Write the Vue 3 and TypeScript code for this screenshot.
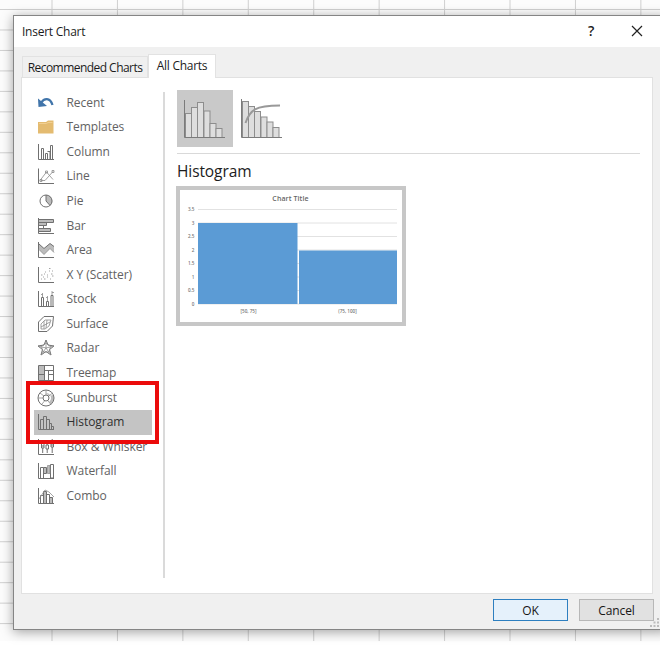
<script setup lang="ts">
import { ref } from 'vue'

interface ChartKind {
  name: string
  dark: string
  fill?: string
  soft?: string
}

const columns = Array.from({ length: 10 }, (_, i) => 52 + i * 65.43)
const rows = Array.from({ length: 31 }, (_, i) => 9.5 + i * 20.47)

const kinds: ChartKind[] = [
  { name: 'Recent', dark: '' },
  { name: 'Templates', dark: '' },
  { name: 'Column', dark: 'M1.5 1V16.5H17M4.5 16V5.5H6.5V16M8.5 16V10.5H10.5V16M10.5 8.5H13V16M13.5 16V2.5H15.5V16' },
  { name: 'Line', dark: 'M1.5 1.5V16.5H17', soft: 'M3 13.5L9.5 5L16 12.5M4 13.5H8L16 4.5M3 12.5h2v2h-2zM8.5 4h2v2h-2zM15 3.5h2v2h-2z' },
  { name: 'Pie', dark: 'M9 3A6 6 0 1 0 15 9A6 6 0 0 0 9 3V9L13 13.5', fill: 'M9 3A6 6 0 0 1 13.3 13.5L9 9Z' },
  { name: 'Bar', dark: 'M1.5 1V16.5H17M2 2.5H16.5V5.5H2M2 5.5H9.5V8.5H2M2 8.5H6.5V11.5H2M2 11.5H13.5V14.5H2', fill: 'M2 2.5H16.5V5.5H2ZM2 5.5H9.5V8.5H2ZM2 11.5H13.5V14.5H2Z' },
  { name: 'Area', dark: 'M1.5 1V16.5H17M2 3L7 7.5L13 2.5L17 5.5', fill: 'M2 3L7 7.5L13 2.5L17 5.5V11.5L13 7.5L7 13.5L2 8.5Z', soft: 'M2 8.5L7 13.5L13 7.5L17 11.5' },
  { name: 'X Y (Scatter)', dark: 'M1.5 1V16.5H17', soft: 'M4 9h1.5M8 6h1M12 2.5h1.5M15 5h1M6 11h1M10 9h1M14 8h1.5M4 13h1M7 13h1.5M10 11h1M13 13h1M15 10h1.5M12 5h1M7 8h1' },
  { name: 'Stock', dark: 'M1.5 1V16.5H17M4.5 16V7.5H6.5V16M9.5 16V11.5H11.5V16M14 16V5.5H16V16', soft: 'M5.5 3V7M10.5 6V11M15 1V5M4 4.5H5.5M9 7.5H10.5M15 2.5H17' },
  { name: 'Surface', dark: 'M1.5 7L7 1.5H16.5L15.5 11L10 16.5H1.5Z', soft: 'M4 9L8 5H14L12 11L8 14H4ZM4 12L13 7M7 6V14M10 5L9 13' },
  { name: 'Radar', dark: 'M9 1L11 6L17 7L12.5 10.5L14 16L9 12.5L4 16L5.5 10.5L1 7L7 6Z', soft: 'M9 4L13.5 7.5L12 13H6L4.5 7.5ZM9 1V9L17 7M9 9L14 16M9 9L4 16M9 9L1 7' },
  { name: 'Treemap', dark: 'M1.5 1.5H16.5V16.5H1.5ZM7.5 1.5V16.5M1.5 10.5H7.5M7.5 6.5H16.5M11.5 6.5V16.5M11.5 10.5H16.5', fill: 'M2 2H7.5V16H2Z' },
  { name: 'Sunburst', dark: 'M9 1A8 8 0 1 0 17 9A8 8 0 0 0 9 1ZM9 6A3 3 0 1 0 12 9A3 3 0 0 0 9 6Z', soft: 'M9 1V6M3 4L7 7M1 9H6M5 15L7.5 12M11 12L14 15.5M12 7L15.5 4', fill: 'M9 4A5 5 0 0 1 12 13L14 15A8 8 0 0 0 16 6L12 7Z' },
  { name: 'Histogram', dark: 'M1.5 1V16.5H17M3.5 16V6.5H6.5V16M6.5 7V3.5H9.5V16M9.5 6.5H12.5V16M12.5 10.5H14.5V16M14.5 13.5H16.5V16' },
  { name: 'Box & Whisker', dark: 'M1.5 1V16.5H17M4.5 5H7V10H4.5ZM9 7H11.5V11H9ZM14 4H16.5V9H14ZM5.7 2V5M5.7 10V15M10.2 4V7M10.2 11V15M15.2 1V4M15.2 9V15M4.5 8H7M14 7H16.5' },
  { name: 'Waterfall', dark: 'M1.5 1V16.5H17M3.5 16V5.5H6.5V16M6.5 5.5H9.5V11.5H7M13.5 2.5H16.5V16H13.5Z', soft: 'M10.5 11.5V3.5H13V11.5Z', fill: 'M7 6H10V11H7ZM11 4H13V11H11Z' },
  { name: 'Combo', dark: 'M1.5 1V16.5H17M3.5 16V8.5H6.5V16M6.5 16V4.5H9.5V16M9.5 7.5H12.5V16M12.5 10.5H15.5V16', soft: 'M2 12L8 3L12 5L17 10', fill: 'M6.5 5H9.5V16H6.5ZM12.5 10H15.5V16H12.5Z' },
]

const selected = ref('Histogram')
const histogramBars = [[8.5, 23.5], [14.5, 17.5], [20.5, 12.5], [27, 21], [33, 33.5], [39, 38.5]]
const paretoBars = [[2.5, 11.5], [8.5, 16.5], [14.5, 21.5], [21, 27], [27, 32], [33, 37.5]]
const ticks = ['3.5', '3', '2.5', '2', '1.5', '1', '0.5', '0']
</script>

<template>
  <main class="screen">
    <svg class="sheet" width="660" height="641" aria-hidden="true">
      <path v-for="x in columns" :key="'c' + x" :d="`M${x} 0V641`" />
      <path v-for="y in rows" :key="'r' + y" :d="`M0 ${y}H660`" />
    </svg>

    <section class="dialog">
      <header class="titlebar">
        <span class="title">Insert Chart</span>
        <span class="help">?</span>
        <svg class="close" width="12" height="12"><path d="M1 1L11 11M11 1L1 11" /></svg>
      </header>

      <nav class="tabs">
        <span class="tab">Recommended Charts</span>
        <span class="tab active">All Charts</span>
      </nav>

      <div class="panel">
        <aside class="side">
          <ul class="kinds">
            <li v-for="k in kinds" :key="k.name" :class="{ selected: selected === k.name }" @click="selected = k.name">
              <svg class="icon" width="18" height="18" viewBox="0 0 18 18">
                <template v-if="k.name === 'Recent'">
                  <path class="arrow" d="M4 9C7 4 13 3 15.5 11" />
                  <path class="arrow-head" d="M1 4.5L1.5 13L10 12Z" />
                </template>
                <template v-else-if="k.name === 'Templates'">
                  <path class="folder" d="M1 4H9L11 2.5H16.5V15.5H1Z" />
                  <path class="folder-edge" d="M2 5.5H9.5L11 4.5H15.5" />
                </template>
                <template v-else>
                  <path v-if="k.fill" class="fill" :d="k.fill" />
                  <path class="dark" :d="k.dark" />
                  <path v-if="k.soft" class="soft" :d="k.soft" />
                </template>
              </svg>
              <span>{{ k.name }}</span>
            </li>
          </ul>
          <div class="highlight"></div>
        </aside>

        <div class="content">
          <div class="variants">
            <div class="variant chosen">
              <svg width="56" height="57">
                <rect v-for="b in histogramBars" :key="b[0]" :x="b[0]" :y="b[1]" width="6" :height="47.5 - b[1]" />
                <path d="M7.5 10V47.5H48" />
              </svg>
            </div>
            <div class="variant">
              <svg width="56" height="57">
                <rect v-for="b in paretoBars" :key="b[0]" :x="b[0]" :y="b[1]" width="6" :height="47.5 - b[1]" />
                <path d="M1.5 9V47.5H42" />
                <path class="curve" d="M5.5 33C10 20 15 15.5 40 15.5" />
              </svg>
            </div>
          </div>
          <h1>Histogram</h1>
          <div class="preview">
            <svg width="222" height="132" viewBox="0 0 222 132">
              <text class="chart-title" x="110.5" y="10.5" text-anchor="middle">Chart Title</text>
              <path v-for="n in 8" :key="n" class="grid" :d="`M18 ${6 + n * 13.5}H217`" />
              <text v-for="(t, i) in ticks" :key="t" class="tick" x="14.5" :y="21 + i * 13.5" text-anchor="end">{{ t }}</text>
              <rect class="bar" x="18" y="33" width="99.5" height="81" />
              <rect class="bar" x="119" y="60.5" width="98" height="53.5" />
              <text class="tick" x="68.5" y="123" text-anchor="middle">[50, 75]</text>
              <text class="tick" x="167.5" y="123" text-anchor="middle">(75, 100]</text>
            </svg>
          </div>
        </div>
      </div>

      <footer class="actions">
        <button class="ok">OK</button>
        <button>Cancel</button>
        <svg class="grip" width="10" height="10">
          <path d="M7 0h2v2H7zM3.5 3.5h2v2h-2zM7 3.5h2v2H7zM0 7h2v2H0zM3.5 7h2v2h-2zM7 7h2v2H7z" />
        </svg>
      </footer>
    </section>
  </main>
</template>

<style>
body { margin: 0; background: #fff; }
</style>

<style scoped>
* { box-sizing: border-box; }
.screen {
  position: relative;
  width: 660px;
  height: 647px;
  overflow: hidden;
  font: 12px/18px "Open Sans", "Noto Sans", sans-serif;
  color: #1c1c1c;
  background: #fff;
}
.sheet { position: absolute; left: 0; top: 0; background: #fcfcfc; }
.sheet path { stroke: #d0d0d0; stroke-width: 1; }
.dialog {
  position: absolute;
  left: 13px;
  top: 15px;
  width: 655px;
  height: 615px;
  display: flex;
  flex-direction: column;
  border: 1px solid #858585;
  background: #f0f0f0;
  box-shadow: 0 2px 11px rgba(0, 0, 0, .36);
}
.titlebar { display: flex; align-items: center; height: 31px; flex: none; background: #fff; padding-left: 8px; }
.title { width: 566px; letter-spacing: -.25px; }
.help { width: 44px; font-weight: 600; font-size: 14px; padding-bottom: 2px; }
.close { margin-top: -2px; margin-left: -1px; }
.close path { stroke: #222; stroke-width: 1.2; fill: none; }
.tabs { display: flex; align-items: flex-end; height: 30px; flex: none; padding-left: 8px; }
.tab {
  width: 126px;
  height: 21px;
  padding-top: 2px;
  border: 1px solid #e2e2e2;
  border-bottom: 0;
  text-align: center;
  white-space: nowrap;
  letter-spacing: -.54px;
}
.tab.active { position: relative; width: 68px; height: 24px; margin-bottom: -1px; background: #fff; letter-spacing: -.28px; }
.panel { display: flex; width: 632px; height: 517px; flex: none; margin-left: 7px; background: #fff; border: 1px solid #e1e1e1; }
.side { position: relative; width: 143px; height: 486px; margin-top: 14px; border-right: 2px solid #dadada; }
.kinds { list-style: none; margin: -1.6px 0 0; padding: 0 0 0 12px; }
.kinds li {
  display: flex;
  align-items: center;
  gap: 11.5px;
  width: 118px;
  height: 24.58px;
  margin: 0;
  padding-left: 3px;
  color: #626262;
  letter-spacing: -.05px;
  white-space: nowrap;
}
.kinds li.selected { background: #c4c4c4; color: #303030; }
.icon { flex: none; }
.dark { fill: none; stroke: #707070; stroke-width: 1; }
.soft { fill: none; stroke: #8c8c8c; stroke-width: .8; }
.fill { fill: #bcbcbc; }
.arrow { fill: none; stroke: #4175aa; stroke-width: 2.3; }
.arrow-head { fill: #4175aa; }
.folder { fill: #e4bb70; }
.folder-edge { fill: none; stroke: #f1cf91; }
.highlight { position: absolute; left: 4px; top: 289px; width: 133px; height: 63px; border: 4px solid #eb0b0b; }
.content { width: 476px; padding: 13px 0 0 12px; }
.variants { display: flex; gap: 7px; width: 463px; height: 63px; border-bottom: 1px solid #d9d9d9; }
.variant { width: 56px; height: 57px; margin-top: -1px; }
.variant svg { display: block; }
.variant.chosen { background: #c9c9c9; }
.variant rect { fill: #dedede; stroke: #8d8d8d; stroke-width: 1; }
.variant path { fill: none; stroke: #7b7b7b; stroke-width: 1; }
.variant path.curve { stroke: #999; stroke-width: 2; }
h1 { margin: 5px 0 3px; font-size: 15.5px; line-height: 24px; font-weight: 400; letter-spacing: -.1px; }
.preview { width: 230px; height: 140px; margin-left: -1px; border: 4px solid #c7c7c7; background: #fff; }
.preview svg { display: block; }
.chart-title { font-size: 7px; font-weight: 600; fill: #666; letter-spacing: .1px; }
.tick { font-size: 4.6px; font-weight: 600; fill: #777; }
.grid { stroke: #e2e2e2; stroke-width: 1; }
.bar { fill: #5b9bd5; }
.actions { display: flex; align-items: center; gap: 11px; flex: 1; padding-left: 479px; padding-bottom: 3px; position: relative; }
button { width: 75px; height: 22px; padding: 1px 0 0; font: inherit; color: #151515; border: 1px solid #b7b7b7; background: #e1e1e1; letter-spacing: -.1px; }
button.ok { border-color: #2d7fc0; background: #e5f1fb; }
.grip { position: absolute; left: 636px; bottom: 1px; fill: #bcbcbc; }
</style>
